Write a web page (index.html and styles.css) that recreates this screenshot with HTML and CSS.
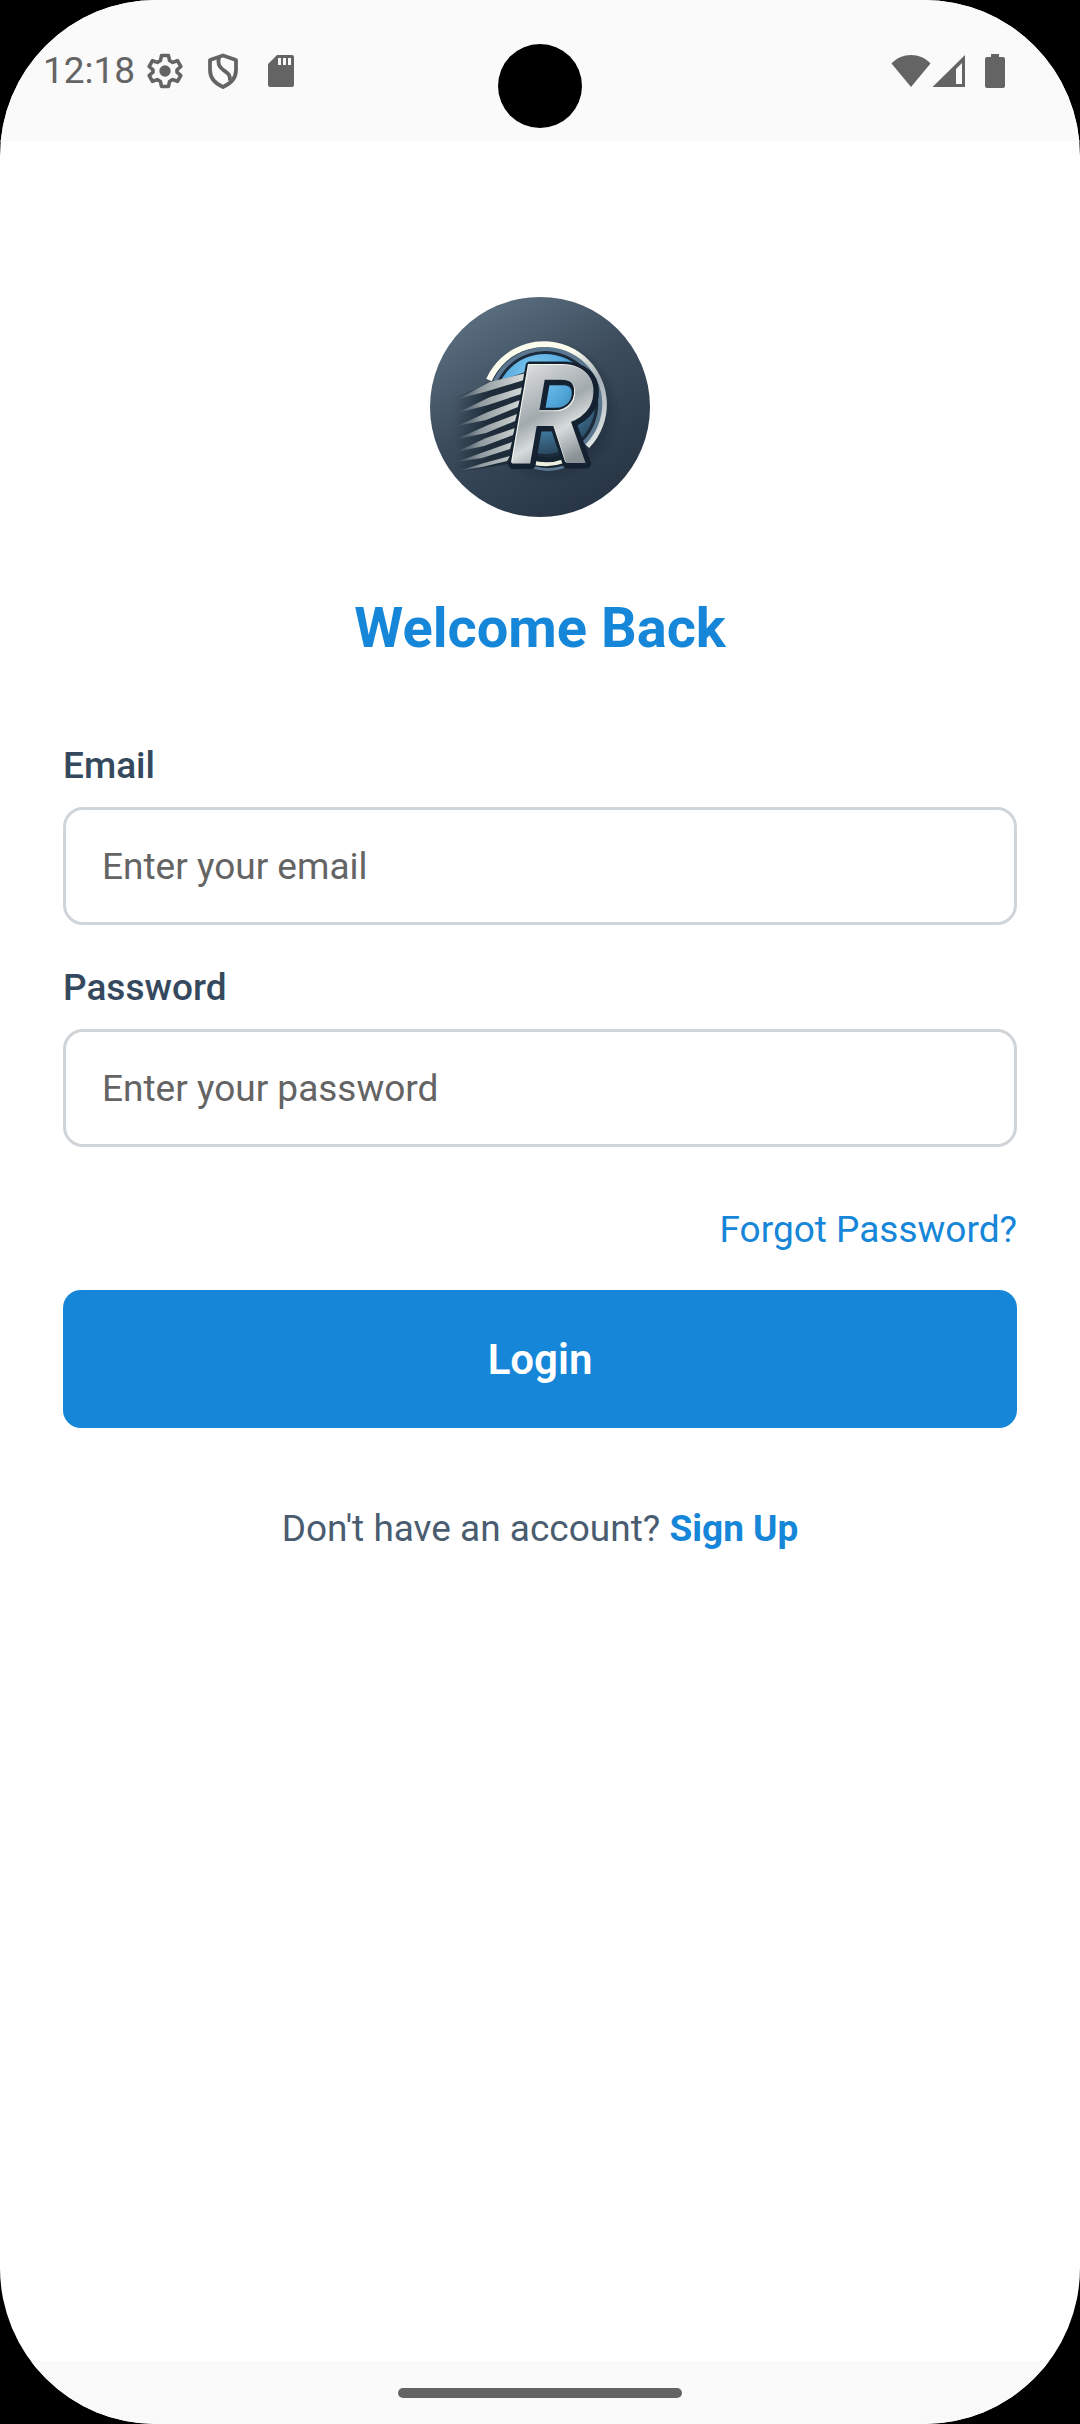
FILE: index.html
```html
<!DOCTYPE html>
<html lang="en">
<head>
  <meta charset="UTF-8">
  <meta name="viewport" content="width=device-width, initial-scale=1.0">
  <title>Login</title>
  <link rel="stylesheet" href="styles.css">
</head>
<body>

  <div class="screen">
    <header class="status-bar">
      <div class="status-left">
        <span class="time">12:18</span>
        <svg class="icon" viewBox="0 0 36 36">
          <path d="M14.5 2.5h7l1 5 3.2 1.9 4.8-1.7 3.3 5.8-3.8 3.3v2.4l3.8 3.3-3.3 5.8-4.8-1.7-3.2 1.9-1 5h-7l-1-5-3.2-1.9-4.8 1.7-3.3-5.8L6 19.200v-2.400L2.200 13.500 5.500 7.700l4.800 1.700 3.200-1.900z" fill="none" stroke="#646464" stroke-width="3.600" stroke-linejoin="round"/>
          <circle cx="18" cy="18" r="5.700" fill="#646464"/>
        </svg>
        <svg class="icon" viewBox="0 0 36 36">
          <path d="M18 2.500L31 7v10c0 8-5 13.500-13 17C10 30.500 5 25 5 17V7z" fill="none" stroke="#646464" stroke-width="3.800" stroke-linejoin="round"/>
          <path d="M14 4.500c-1.500 5-.5 9 4 12.200 5 3.500 7.500 5 6.800 11" fill="none" stroke="#646464" stroke-width="3.800"/>
        </svg>
        <svg class="icon" viewBox="0 0 36 36">
          <path fill="#646464" fill-rule="evenodd" d="M14 2h15a2 2 0 0 1 2 2v28a2 2 0 0 1-2 2H7a2 2 0 0 1-2-2V11zM15 5v7h3V5zM20 5v7h3V5zM25 5v7h3V5z"/>
        </svg>
      </div>
      <div class="status-right">
        <svg class="icon-wifi" viewBox="0 0 40 36">
          <path fill="#646464" d="M20 34L.5 10.500C11-.8 29-.8 39.500 10.500z"/>
        </svg>
        <svg class="icon" viewBox="0 0 36 36">
          <path fill="#646464" fill-rule="evenodd" d="M34 2v32H1.500zM31 10l-6 6v15h6z"/>
        </svg>
        <svg class="icon" viewBox="0 0 36 36">
          <path fill="#646464" d="M14 1h8v3h4a2 2 0 0 1 2 2v27a2 2 0 0 1-2 2H10a2 2 0 0 1-2-2V6a2 2 0 0 1 2-2h4z"/>
        </svg>
      </div>
      <div class="camera"></div>
    </header>

    <main class="content">
      <svg class="logo" viewBox="0 0 220 220" role="img" aria-label="R logo">
        <defs>
          <linearGradient id="bg" x1="0.15" y1="0.05" x2="0.7" y2="1">
            <stop offset="0" stop-color="#5c7182"/>
            <stop offset="0.45" stop-color="#3c4c5c"/>
            <stop offset="1" stop-color="#263443"/>
          </linearGradient>
          <linearGradient id="silver" x1="0" y1="0" x2="0.3" y2="1">
            <stop offset="0.1" stop-color="#f3f4f0"/>
            <stop offset="0.35" stop-color="#c5c9cc"/>
            <stop offset="0.55" stop-color="#a2aaad"/>
            <stop offset="0.7" stop-color="#d7dbdc"/>
            <stop offset="0.9" stop-color="#8a9296"/>
          </linearGradient>
          <linearGradient id="ring" x1="0" y1="0" x2="1" y2="1">
            <stop offset="0" stop-color="#fbfbee"/>
            <stop offset="0.4" stop-color="#fbfbee"/>
            <stop offset="0.65" stop-color="#a5afb8"/>
            <stop offset="1" stop-color="#e9edeb"/>
          </linearGradient>
          <linearGradient id="streak" gradientUnits="userSpaceOnUse" x1="24" y1="0" x2="98" y2="0">
            <stop offset="0" stop-color="#7b8994" stop-opacity="0"/>
            <stop offset="0.35" stop-color="#8f999e"/>
            <stop offset="1" stop-color="#dfe2e0"/>
          </linearGradient>
          <linearGradient id="streak-shade" gradientUnits="userSpaceOnUse" x1="24" y1="0" x2="98" y2="0">
            <stop offset="0" stop-color="#1e2c3a" stop-opacity="0"/>
            <stop offset="0.5" stop-color="#1e2c3a"/>
          </linearGradient>
          <radialGradient id="globe" cx="0.4" cy="0.2" r="0.9">
            <stop offset="0" stop-color="#83cdf3"/>
            <stop offset="0.4" stop-color="#4fa5d9"/>
            <stop offset="0.75" stop-color="#376482"/>
            <stop offset="1" stop-color="#24384b"/>
          </radialGradient>
          <radialGradient id="shade">
            <stop offset="0.75" stop-color="#172432" stop-opacity="0.9"/>
            <stop offset="1" stop-color="#172432" stop-opacity="0"/>
          </radialGradient>
        </defs>
        <circle cx="110" cy="110" r="110" fill="url(#bg)"/>
        <circle cx="119" cy="115" r="72" fill="url(#shade)" opacity="0.5"/>
        <circle cx="115" cy="107" r="58" fill="#1c2b3b"/>
        <circle cx="115" cy="107" r="50" fill="url(#globe)"/>

        <!-- outer and inner ring, open on the lower left -->
        <g fill="none">
          <path d="M59 83A60 60 0 1 1 157 149" stroke="url(#ring)" stroke-width="6"/>
          <path d="M64 87A55 55 0 1 1 154 146" stroke="#5b7890" stroke-width="4"/>
          <path d="M101 163Q118 170 135 163" stroke="#152331" stroke-width="12"/>
          <path d="M101 165Q118 170 134 164" stroke="#edf0df" stroke-width="4"/>
          <path d="M98 168Q118 177 138 168" stroke="#5b7890" stroke-width="3"/>
        </g>

        <!-- speed lines -->
        <path d="M24 100L98 74 84 166 24 176z" fill="url(#streak-shade)"/>
        <g fill="url(#streak)">
          <path d="M28 102L60 85 96 76 94 83 58 94z"/>
          <path d="M27 116L60 100 93 90 91 97 58 108z"/>
          <path d="M27 129L58 115 90 103 88 110 56 123z"/>
          <path d="M27 142L58 128 87 117 85 124 56 136z"/>
          <path d="M26 155L56 141 85 131 83 138 54 149z"/>
          <path d="M26 165L54 155 82 145 80 152 52 161z"/>
          <path d="M28 174L54 166 80 159 77 164 52 170z"/>
        </g>

        <text class="logo-letter logo-shadow" x="81" y="167">R</text>
        <text class="logo-letter logo-edge" x="79" y="165">R</text>
        <text class="logo-letter logo-face" x="80" y="166">R</text>
      </svg>

      <h1 class="title">Welcome Back</h1>

      <form class="login-form">
        <div class="field">
          <label for="email">Email</label>
          <input type="email" id="email" placeholder="Enter your email">
        </div>
        <div class="field">
          <label for="password">Password</label>
          <input type="password" id="password" placeholder="Enter your password">
        </div>
        <a class="forgot" href="#">Forgot Password?</a>
        <button type="submit" class="login-btn">Login</button>
      </form>

      <p class="signup">Don't have an account? <a href="#">Sign Up</a></p>
    </main>

    <footer class="nav-bar">
      <div class="nav-handle"></div>
    </footer>
  </div>

</body>
</html>
```

FILE: styles.css
```css
* {
  box-sizing: border-box;
}

body {
  margin: 0;
  background: #000;
  font-family: Roboto, sans-serif;
  font-size: 37px;
  line-height: 50px;
}

.screen {
  display: flex;
  flex-direction: column;
  min-height: 100vh;
  background: #fff;
  border-radius: 156px;
  overflow: hidden;
}

/* status bar */
.status-bar {
  position: relative;
  display: flex;
  justify-content: space-between;
  align-items: center;
  height: 142px;
  padding: 0 67px 0 43px;
  background: #fafafa;
  color: #646464;
}

.status-left {
  display: flex;
  align-items: center;
  gap: 22px;
}

.time {
  margin-right: -10px;
}

.status-right {
  display: flex;
  align-items: center;
}

.status-right .icon:last-child {
  margin-left: 10px;
}

.icon,
.icon-wifi {
  display: block;
  width: 36px;
  height: 36px;
}

.icon-wifi {
  width: 40px;
}

.camera {
  position: absolute;
  top: 44px;
  left: 50%;
  width: 84px;
  height: 84px;
  margin-left: -42px;
  background: #000;
  border-radius: 50%;
}

/* login screen */
.content {
  flex: 1;
  display: flex;
  flex-direction: column;
  align-items: center;
  padding: 155px 63px 0;
}

.logo {
  display: block;
  width: 220px;
  height: 220px;
}

.logo-letter {
  font-family: Roboto, sans-serif;
  font-size: 138px;
  font-weight: 600;
  font-style: italic;
}

.logo-shadow {
  fill: #142130;
  stroke: #142130;
  stroke-width: 9px;
  stroke-linejoin: round;
}

.logo-edge {
  fill: #f4f5ee;
}

.logo-face {
  fill: url(#silver);
}

.title {
  margin: 74px 0 76px;
  font-size: 56px;
  line-height: 74px;
  font-weight: 700;
  color: #1686d9;
}

.login-form {
  display: flex;
  flex-direction: column;
  width: 100%;
}

.field {
  display: flex;
  flex-direction: column;
  gap: 16px;
  margin-bottom: 38px;
}

.field label {
  font-weight: 500;
  color: #34495e;
}

.field input {
  width: 100%;
  height: 118px;
  padding: 0 36px;
  border: 3px solid #d0d5da;
  border-radius: 20px;
  background: #fff;
  font: inherit;
  color: #34495e;
}

.field input::placeholder {
  color: #646464;
  opacity: 1;
}

.forgot {
  align-self: flex-end;
  margin: 20px 0 35px;
  color: #1686d9;
  text-decoration: none;
}

.login-btn {
  height: 138px;
  border: none;
  border-radius: 18px;
  background: #1686d9;
  color: #fff;
  font-family: inherit;
  font-size: 42px;
  font-weight: 600;
}

.signup {
  margin: 76px 0 0;
  color: #4a5d70;
}

.signup a {
  font-weight: 700;
  color: #1686d9;
  text-decoration: none;
}

/* gesture bar */
.nav-bar {
  display: flex;
  justify-content: center;
  align-items: center;
  height: 63px;
  background: #fafafa;
}

.nav-handle {
  width: 284px;
  height: 10px;
  border-radius: 5px;
  background: #646464;
}
```
